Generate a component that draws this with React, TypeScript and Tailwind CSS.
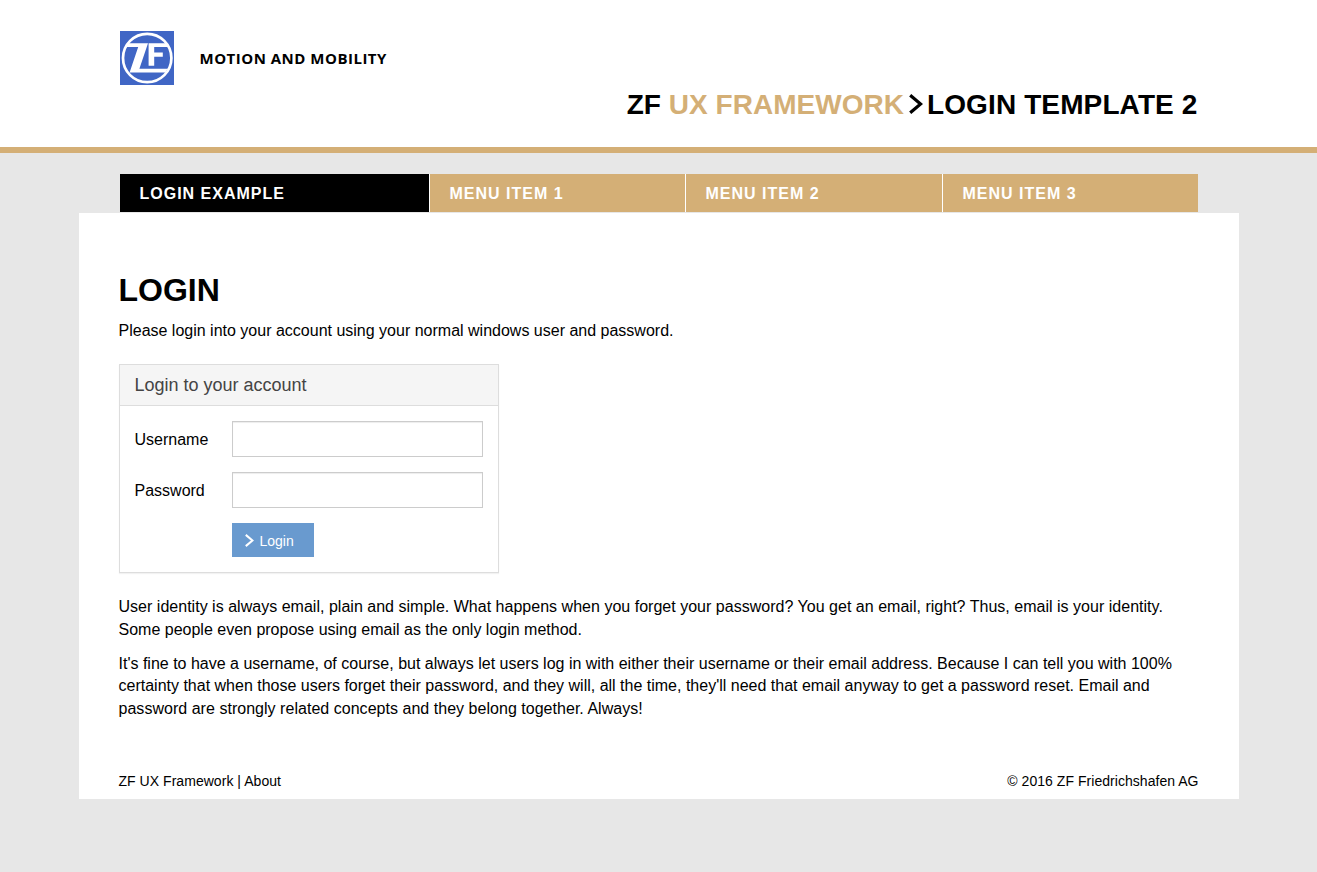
function Logo() {
  return (
    <svg className="block h-[54px] w-[54px]" viewBox="0 0 54 54" aria-label="ZF">
      <rect width="54" height="54" fill="#4066c5" />
      <circle cx="27.2" cy="27" r="24.2" fill="none" stroke="#fff" strokeWidth="2.7" />
      <path
        fill="#fff"
        d="M7.6 12.3H28L19.4 37.8H47.6L45.4 41.4H9.6L18.2 16H5.4Z"
      />
      <path fill="#fff" d="M28.6 12.3H46.6L49 16H34.2V21.4H42.8V25.8H34.2V34.8H28.6Z" />
    </svg>
  );
}

function Chevron({ className }: { className: string }) {
  return (
    <svg className={className} viewBox="0 0 14 20" fill="none" stroke="currentColor" strokeWidth="3.2">
      <path d="M1.2 1.2L11.6 10L1.2 18.8" />
    </svg>
  );
}

function Field({ label, type }: { label: string; type: string }) {
  return (
    <label className="mb-[15px] flex h-9 items-center">
      <span className="w-[97px] pt-[2px]">{label}</span>
      <input
        type={type}
        className="h-9 w-[251px] border border-[#ccc] bg-white px-3 shadow-[inset_0_1px_1px_rgba(0,0,0,0.075)] outline-none"
      />
    </label>
  );
}

const items = ["MENU ITEM 1", "MENU ITEM 2", "MENU ITEM 3"];

export default function App() {
  return (
    <div className="min-h-screen bg-[#e7e7e7] font-['Liberation_Sans',Arial,sans-serif] text-base text-black">
      <header className="h-[153px] border-b-[6px] border-[#d4af76] bg-white">
        <div className="mx-auto w-[1078px] pt-[31px]">
          <div className="flex h-[54px] items-center">
            <Logo />
            <span className="ml-[26px] whitespace-nowrap font-['Open_Sans',sans-serif] text-[15px] font-bold tracking-[0.5px]">
              MOTION AND MOBILITY
            </span>
          </div>
          <h1 className="flex h-[38px] items-center justify-end whitespace-nowrap text-[28px] font-bold">
            <span className="pt-[2px] tracking-[0.03px]">
              ZF <span className="text-[#d4af76]">UX FRAMEWORK</span>
            </span>
            <Chevron className="ml-[5px] mr-1 h-5 w-3.5" />
            <span className="pt-[2px] tracking-[0.12px]">LOGIN TEMPLATE 2</span>
          </h1>
        </div>
      </header>

      <nav className="mx-auto flex h-[59px] w-[1077px] pt-[21px] text-base font-bold tracking-[1px] text-white">
        <a className="flex w-[309px] shrink-0 items-center bg-black pl-[19.5px] pt-px">LOGIN EXAMPLE</a>
        <div className="-mr-px grid flex-1 grid-cols-[256px_257px_256px]">
          {items.map((item) => (
            <a
              key={item}
              className="flex items-center border-l border-white bg-[#d4af76] pl-[19.5px] pt-px"
            >
              {item}
            </a>
          ))}
        </div>
      </nav>

      <main className="mx-auto mt-px flex h-[586px] w-[1160px] flex-col bg-white px-10 pt-[58px]">
        <h2 className="text-[32px] font-bold leading-[38px]">LOGIN</h2>
        <p className="mt-[10px] whitespace-nowrap leading-[23px]">
          Please login into your account using your normal windows user and password.
        </p>

        <section className="mt-[22px] h-[209px] w-[380px] shrink-0 border border-[#ddd] shadow-[0_1px_1px_rgba(0,0,0,0.05)]">
          <h3 className="flex h-[41px] items-center border-b border-[#ddd] bg-[#f5f5f5] px-[15px] text-lg text-[#444]">
            Login to your account
          </h3>
          <form className="p-[15px]">
            <Field label="Username" type="text" />
            <Field label="Password" type="password" />
            <button
              type="button"
              className="ml-[97px] flex h-[34px] w-[82px] items-center bg-[#699acf] pl-[13px] text-sm text-white"
            >
              <Chevron className="mr-[6px] h-[13px] w-[9px]" />
              <span className="pt-[2px]">Login</span>
            </button>
          </form>
        </section>

        <p className="mt-[23px] whitespace-nowrap leading-[22.86px]">
          <span className="tracking-[0.018px]">
            User identity is always email, plain and simple. What happens when you forget your password? You get an email, right? Thus, email is your identity.
          </span>
          <br />
          Some people even propose using email as the only login method.
        </p>
        <p className="mt-[11px] whitespace-nowrap leading-[22.7px]">
          It's fine to have a username, of course, but always let users log in with either their username or their email address. Because I can tell you with 100%
          <br />
          certainty that when those users forget their password, and they will, all the time, they'll need that email anyway to get a password reset. Email and
          <br />
          <span className="tracking-[0.03px]">
            password are strongly related concepts and they belong together. Always!
          </span>
        </p>

        <footer className="mt-auto flex justify-between pb-2 text-sm tracking-[0.04px]">
          <span>ZF UX Framework | About</span>
          <span>© 2016 ZF Friedrichshafen AG</span>
        </footer>
      </main>
    </div>
  );
}
